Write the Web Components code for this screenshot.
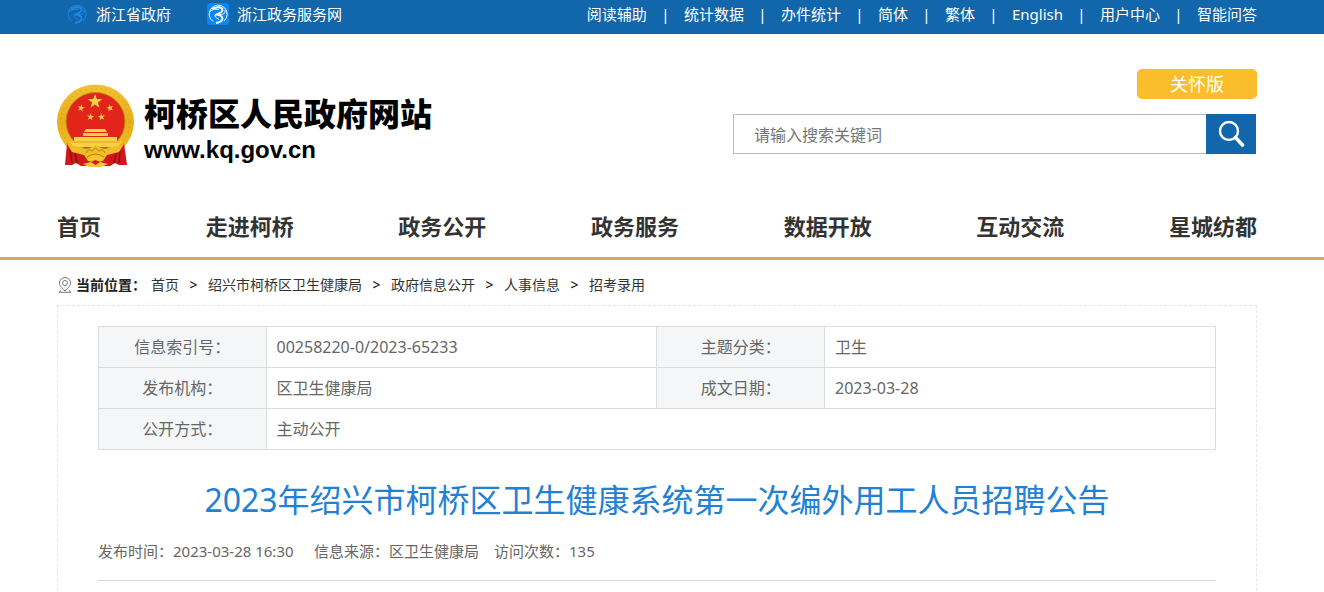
<!DOCTYPE html>
<html lang="zh-CN">
<head>
<meta charset="utf-8">
<meta name="viewport" content="width=device-width, initial-scale=1">
<title>2023年绍兴市柯桥区卫生健康系统第一次编外用工人员招聘公告</title>
<style>
:root{--blue:#1266ab;--gold:#d0a95a;--line:#dcdcdc}
body{margin:0;background:#fff;color:#333;font-family:"Noto Sans","Noto Sans CJK SC",sans-serif;font-size:16px;line-height:24px}
</style>
</head>
<body>
<gov-page></gov-page>
<script>
const define = (name, html) => {
  const t = document.createElement('template');
  t.innerHTML = `<style>*{box-sizing:border-box}:host{display:block}a{color:inherit;text-decoration:none}</style>` + html;
  customElements.define(name, class extends HTMLElement {
    constructor() {
      super();
      this.attachShadow({mode: 'open'}).append(t.content.cloneNode(true));
    }
  });
};

define('page-column', `
<style>:host{padding:0 10px 0 0}div{max-width:1200px;margin:0 auto}</style>
<div><slot></slot></div>`);

define('zj-mark', `
<style>:host{width:22px;height:22px;color:#1e88e8}:host([boxed]){background:#0b86f5;border-radius:3px;color:#fff}svg{display:block}</style>
<svg width="22" height="22" viewBox="0 0 22 22" fill="none" stroke="currentColor" aria-hidden="true">
<path d="M6 18.500A9 9 0 1 1 17 18" stroke-width="1"/>
<path d="M5 6C9 3.500 15.500 3.500 15.500 7C15.500 10 11 10.500 9.500 11.500C13 12 16 13.500 15.500 16C15 18.500 12 19.500 9 20" stroke-width="1.800"/>
<path d="M3 8.500C6 6 9 6 12 6.500M9.500 11.500C6 13 9 14.500 12 16.500M18 7C18.500 10 17 11.500 13 11.500" stroke-width="1"/>
</svg>`);

define('top-bar', `
<style>
:host{background:var(--blue);color:#fff;font-size:15px;line-height:28px;height:34px}
.row{display:flex;justify-content:space-between;height:34px}
.sites{display:flex;gap:36px;padding-left:9px}
.sites a{display:flex;gap:8px}
zj-mark{margin-top:3px}
ul{display:flex;list-style:none;margin:0;padding:0}
li+li::before{content:"|";display:inline-block;width:37px;text-align:center}
</style>
<page-column><div class="row">
<div class="sites"><a href="#"><zj-mark></zj-mark>浙江省政府</a><a href="#"><zj-mark boxed></zj-mark>浙江政务服务网</a></div>
<ul><li><a href="#">阅读辅助</a></li><li><a href="#">统计数据</a></li><li><a href="#">办件统计</a></li><li><a href="#">简体</a></li><li><a href="#">繁体</a></li><li><a href="#">English</a></li><li><a href="#">用户中心</a></li><li><a href="#">智能问答</a></li></ul>
</div></page-column>`);

define('national-emblem', `
<style>svg{display:block}</style>
<svg width="78" height="84" viewBox="0 0 78 84" aria-hidden="true">
<defs><linearGradient id="g" x1="0" y1="0" x2="0" y2="1"><stop offset="0" stop-color="#f2c231"/><stop offset=".5" stop-color="#e8ae1c"/><stop offset="1" stop-color="#f4c22c"/></linearGradient>
<path id="s" d="M0-10 2.4-3.2 9.5-3.1 3.8 1.2 5.9 8.1 0 4-5.9 8.1-3.8 1.2-9.5-3.1-2.4-3.2Z"/></defs>
<ellipse cx="38.500" cy="38" rx="38.500" ry="37.500" fill="url(#g)"/>
<ellipse cx="38.500" cy="38" rx="34.500" ry="33.500" fill="none" stroke="#cf8e0d" stroke-width="2" stroke-dasharray="1 4" opacity=".45"/>
<path d="M10 59C13 67 24 69 31 68L46 68C54 69 65 66 67 59L70 81 62 81 58 79 53 82 24 82 19 79 15 81 8 81Z" fill="#d0181a"/>
<path d="M13 66 15 79M18 69 20 79M63 67 62 79M59 69 57 79" stroke="#8e0e10" stroke-width="1.500" fill="none"/>
<ellipse cx="38.500" cy="37.500" rx="29.500" ry="29" fill="#e1251b" stroke="#c98a0b" stroke-width="1"/>
<g fill="#f8cf45"><use href="#s" transform="translate(38 17.500) scale(.76)"/><use href="#s" transform="translate(24 24) rotate(15) scale(.38)"/><use href="#s" transform="translate(53 24) rotate(-15) scale(.38)"/><use href="#s" transform="translate(33.500 33) rotate(8) scale(.38)"/><use href="#s" transform="translate(44.500 33) rotate(-8) scale(.38)"/>
<path d="M29 45H48L50 48H27ZM26 49H51V52H26ZM17 53H60V57H65L61 62Q52 64 38.500 63Q25 64 16 62L12 57H17Z"/></g>
<path d="M14 58H63" stroke="#e0a41c"/>
<path d="M10 60Q20 68 33 64L38.500 61 44 64Q57 68 67 60L62 68 50 71 46 77 38.500 79 31 77 27 71 15 68Z" fill="#f2bd27"/>
<path d="M29 69Q31 64 35 67L38.500 64 42 67Q46 64 48 69M30 73Q38.500 67 47 73" stroke="#bd7d0b" fill="none"/>
<path d="M25 82 27 76 34 78 38.500 76 43 78 50 76 52 82Z" fill="#d5181a"/>
<path d="M31 74Q38.500 70 46 74L43 77 38.500 75 34 77ZM26 80 34 78 38.500 81 43 78 51 80 44 83H32Z" fill="#f7c638"/>
</svg>`);

define('search-box', `
<style>
:host{width:523px;max-width:100%;margin-right:1px}
form{display:flex;height:40px}
input{flex:1;min-width:0;border:1px solid #bbb;border-right:0;border-radius:0;padding:2px 20px 0;font:inherit;font-size:16px;color:#333;outline:0;background:#fff}
input::placeholder{color:#757575;opacity:1}
button{width:50px;border:0;padding:0;background:var(--blue);color:#fff;display:grid;place-items:center}
</style>
<form><input type="text" placeholder="请输入搜索关键词" aria-label="请输入搜索关键词">
<button type="button" aria-label="搜索"><svg width="28" height="28" viewBox="0 0 28 28" fill="none" stroke="currentColor"><circle cx="12" cy="11" r="9" stroke-width="2.400"/><path d="M18.500 17.500 25.500 25" stroke-width="3.600" stroke-linecap="round"/></svg></button></form>`);

define('site-header', `
<style>
.row{display:flex;justify-content:space-between;padding-top:35px;height:162px}
.brand{display:flex;gap:9px;padding-top:15px;color:#000}
.words{display:flex;flex-direction:column;padding-top:12px}
.name{font-size:32px;line-height:36px;font-weight:900}
.url{font:bold 24px/36px "Liberation Sans",Arial,sans-serif}
.tools{display:flex;flex-direction:column;align-items:flex-end;gap:15px}
.care{width:120px;height:30px;border:0;border-radius:5px;background:#fbbd2c;color:#fff;font:inherit;font-size:18px;line-height:30px;padding:0}
</style>
<page-column><div class="row">
<a class="brand" href="#"><national-emblem></national-emblem><span class="words"><span class="name">柯桥区人民政府网站</span><span class="url">www.kq.gov.cn</span></span></a>
<div class="tools"><button class="care" type="button">关怀版</button><search-box></search-box></div>
</div></page-column>`);

define('main-nav', `
<style>
:host{border-bottom:3px solid var(--gold)}
nav{display:flex;justify-content:space-between;font-size:22px;line-height:32px;font-weight:bold;padding:14px 0 15px}
</style>
<page-column><nav><a href="#">首页</a><a href="#">走进柯桥</a><a href="#">政务公开</a><a href="#">政务服务</a><a href="#">数据开放</a><a href="#">互动交流</a><a href="#">星城纺都</a></nav></page-column>`);

define('bread-crumb', `
<style>
nav{display:flex;align-items:center;height:45px;padding:5px 0 0 1px;font-size:14px;line-height:20px}
svg{margin-right:4px}
b{margin-right:5px;color:#222}
a+a::before{content:">";display:inline-block;width:29px;text-align:center;font-weight:500;color:#222}
</style>
<nav><svg width="14" height="16" viewBox="0 0 14 16" fill="none" stroke="#777" aria-hidden="true"><path d="M7 14C3 10 1.5 8.500 1.500 6A5.500 5.500 0 0 1 12.500 6C12.500 8.500 11 10 7 14ZM3 13.500 1 15.300H13L11 13.500"/><circle cx="7" cy="6" r="2.500"/></svg><b>当前位置：</b><a href="#">首页</a><a href="#">绍兴市柯桥区卫生健康局</a><a href="#">政府信息公开</a><a href="#">人事信息</a><a href="#">招考录用</a></nav>`);

define('info-table', `
<style>
table{width:100%;table-layout:fixed;border-collapse:collapse;color:#666;line-height:24px}
col.k{width:15%}col.v{width:35%}
th,td{border:1px solid var(--line);padding:8px 10px;font-weight:400;height:41px}
th{background:#f4f6f8;text-align:center}
td{text-align:left}
</style>
<table><colgroup><col class="k"><col class="v"><col class="k"><col class="v"></colgroup><tbody>
<tr><th scope="row">信息索引号：</th><td>00258220-0/2023-65233</td><th scope="row">主题分类：</th><td>卫生</td></tr>
<tr><th scope="row">发布机构：</th><td>区卫生健康局</td><th scope="row">成文日期：</th><td>2023-03-28</td></tr>
<tr><th scope="row">公开方式：</th><td colspan="3">主动公开</td></tr>
</tbody></table>`);

define('article-panel', `
<style>
:host{border:1px dashed #e5e5e5;border-bottom:0;padding:20px 40px 30px;min-height:300px}
h1{margin:26px 0 0;color:#2381d3;font-size:32px;line-height:48px;font-weight:400;text-align:center}
.meta{display:flex;gap:15px;margin:0;padding:15px 0 17px;border-bottom:1px solid var(--line);color:#666;font-size:15px;line-height:24px}
.when{min-width:201px}
</style>
<info-table></info-table>
<h1>2023年绍兴市柯桥区卫生健康系统第一次编外用工人员招聘公告</h1>
<p class="meta"><span class="when">发布时间：2023-03-28 16:30</span><span>信息来源：区卫生健康局</span><span>访问次数：135</span></p>`);

define('gov-page', `
<top-bar></top-bar>
<site-header></site-header>
<main-nav></main-nav>
<page-column><bread-crumb></bread-crumb><article-panel></article-panel></page-column>`);
</script>
</body>
</html>
